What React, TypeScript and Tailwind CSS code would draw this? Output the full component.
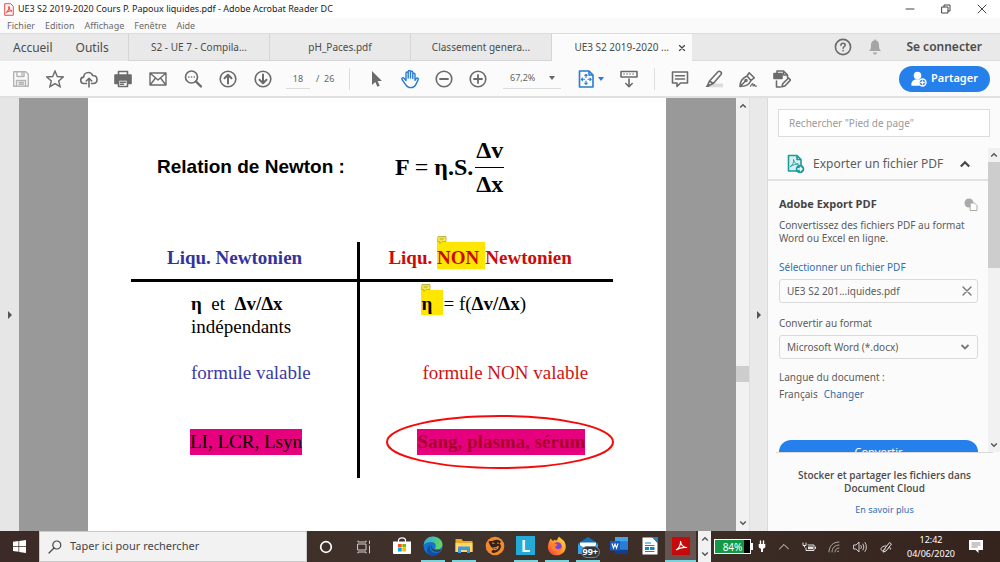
import React from "react";
import type { ReactNode } from "react";

type IconProps = { children: ReactNode; className?: string; box?: string };

function Icon({ children, className = "size-[18px] text-[#6b6b6b]", box = "0 0 18 18" }: IconProps) {
  return (
    <svg
      viewBox={box}
      className={`shrink-0 ${className}`}
      fill="none"
      stroke="currentColor"
      strokeWidth="1.600"
      strokeLinecap="round"
      strokeLinejoin="round"
      aria-hidden="true"
    >
      {children}
    </svg>
  );
}

function ToolButton({ label, children }: { label: string; children: ReactNode }) {
  return (
    <button type="button" aria-label={label} className="flex h-7 w-[34px] shrink-0 items-center justify-center">
      {children}
    </button>
  );
}

function Chevron({ up = false, className = "h-2 w-2 text-[#555]" }: { up?: boolean; className?: string }) {
  return (
    <Icon box="0 0 10 10" className={className}>
      <path d={up ? "M1.500 7 5 3.500 8.500 7" : "M1.500 3 5 6.500 8.500 3"} strokeWidth="1.800" strokeLinecap="butt" strokeLinejoin="miter" />
    </Icon>
  );
}

function TitleBar() {
  return (
    <header className="flex h-[18px] shrink-0 items-center bg-white pl-1 text-[9px] text-[#222]">
      <svg viewBox="0 0 10 13" className="mr-1 h-[13px] w-[10px] shrink-0" aria-hidden="true">
        <path d="M.7.700h6l2.600 2.600v9h-8.600z" fill="#fff3f2" stroke="#e8524c" />
        <path d="M2.300 9.500C4 8 5 6 5 3.500 5.200 6 6.300 7.600 8 8 6 7.600 4 8.200 2.300 9.500z" fill="none" stroke="#e0322c" strokeWidth="1" />
      </svg>
      <h1 className="flex-1 truncate">UE3 S2 2019-2020 Cours P. Papoux liquides.pdf - Adobe Acrobat Reader DC</h1>
      <button type="button" aria-label="Réduire" className="flex w-9 justify-center">
        <Icon box="0 0 10 10" className="size-[10px] text-[#444]"><path d="M1 5h8" strokeWidth="1" /></Icon>
      </button>
      <button type="button" aria-label="Restaurer" className="flex w-9 justify-center">
        <Icon box="0 0 10 10" className="size-[10px] text-[#444]"><path d="M1 3h6v6H1zM3 3V1h6v6H7" strokeWidth="1" /></Icon>
      </button>
      <button type="button" aria-label="Fermer" className="flex w-9 justify-center">
        <Icon box="0 0 10 10" className="size-[10px] text-[#444]"><path d="m1 1 8 8M9 1 1 9" strokeWidth="1" /></Icon>
      </button>
    </header>
  );
}

function MenuBar() {
  return (
    <nav aria-label="Menu" className="flex h-[15px] shrink-0 items-center gap-[10px] bg-[#fafafa] pl-[7px] text-[9px] text-[#6a6a6a]">
      {["Fichier", "Edition", "Affichage", "Fenêtre", "Aide"].map((m) => (
        <button key={m} type="button" className="leading-3">{m}</button>
      ))}
    </nav>
  );
}

function TabBar() {
  return (
    <div className="flex h-7 shrink-0 items-stretch border-t border-[#dcdcdc] bg-[#e9e9e9] text-[#4b4b4b]">
      <div className="flex w-[129px] shrink-0 items-center gap-[23px] border-r border-[#d5d5d5] pl-[13px] text-[12px]">
        <button type="button">Accueil</button>
        <button type="button">Outils</button>
      </div>
      {["S2 - UE 7 - Compila...", "pH_Paces.pdf", "Classement genera..."].map((t) => (
        <button key={t} type="button" className="w-[141px] shrink-0 border-r border-b border-[#d5d5d5] text-center text-[10px]">
          {t}
        </button>
      ))}
      <div className="flex w-[140px] shrink-0 items-center justify-end gap-2 bg-[#fbfbfb] pr-[5px] text-[10px]">
        <span className="whitespace-nowrap">UE3 S2 2019-2020 ...</span>
        <button type="button" aria-label="Fermer l'onglet" className="flex size-[10px] items-center justify-center">
          <Icon box="0 0 6 6" className="size-[6px] text-[#444]"><path d="m.5.500 5 5M5.500.500l-5 5" strokeWidth="1.300" /></Icon>
        </button>
      </div>
      <div className="flex flex-1 items-center justify-end border-b border-[#dcdcdc] pr-[18px]">
        <button type="button" aria-label="Aide">
          <Icon>
            <circle cx="9" cy="9" r="7.600" />
            <path d="M6.900 7.300C6.900 4.500 11.200 4.600 11.200 7c0 1.500-2.100 1.600-2.100 3.300M9.100 12.500v.3" strokeWidth="1.600" />
          </Icon>
        </button>
        <button type="button" aria-label="Notifications" className="ml-[15px]">
          <Icon className="size-[16px] text-[#a5a5a5]" box="0 0 16 16">
            <path d="M8 1.500c3 0 4 2 4 5s.7 4.300 2 5.500H2c1.300-1.200 2-2.500 2-5.500s1-5 4-5z" fill="currentColor" stroke="none" />
            <path d="M6 13.500h4a2 2 0 0 1-4 0zM7.200.5h1.600v2H7.200z" fill="currentColor" stroke="none" />
          </Icon>
        </button>
        <button type="button" className="ml-[23px] text-[12px] font-semibold">Se connecter</button>
      </div>
    </div>
  );
}

function Separator() {
  return <div className="h-[22px] w-px shrink-0 bg-[#dedede]" />;
}

function Toolbar() {
  return (
    <div className="flex h-[37px] shrink-0 items-center border-b-2 border-[#e0e0e0] bg-[#fbfbfb] pr-[10px] pl-1 text-[9px] text-[#666]">
      <ToolButton label="Enregistrer">
        <Icon className="size-[18px] text-[#b4b4b4]"><path d="M1.700 1.700h12l2.600 2.600v12H1.700zM5 2v4.500h7V2M10 3v2M4.500 16v-5.500h9V16M7 12.500h4.500M7 14.300h4.500" strokeWidth="1.400" /></Icon>
      </ToolButton>
      <ToolButton label="Favoris">
        <Icon><path d="m9 1 2.300 5.500 5.900.500-4.500 3.900 1.400 5.800L9 13.600l-5.100 3.100 1.400-5.800L.8 7l5.900-.5z" strokeWidth="1.400" strokeLinejoin="miter" /></Icon>
      </ToolButton>
      <ToolButton label="Partager dans le cloud">
        <Icon><path d="M6.500 13.500H4.200a3.200 3.200 0 0 1-.5-6.400C3.700 4.500 5.700 2.500 8.300 2.500c2 0 3.700 1.200 4.400 3 2.600 0 4.300 1.700 4.300 4 0 2.300-1.700 4-4 4h-1.500M9 17V8.500M6.300 11 9 8.300l2.700 2.700" /></Icon>
      </ToolButton>
      <ToolButton label="Imprimer">
        <Icon><path d="M4.500 5V1.500h9V5" /><path d="M1 5h16v8.500h-2.500V10h-11v3.500H1z" fill="currentColor" /><path d="M4.500 10h9v6.500h-9zM6.500 12.300h5M6.500 14.300h3" fill="#fff" /></Icon>
      </ToolButton>
      <div className="ml-px flex shrink-0 gap-px">
        <ToolButton label="Courrier">
          <Icon><path d="M1 3h16v12H1zM1.500 3.500 9 10l7.500-6.500M1.500 14.500 6.500 8M16.500 14.500l-5-6.500" strokeWidth="1.400" /></Icon>
        </ToolButton>
        <ToolButton label="Rechercher">
          <Icon><circle cx="7.500" cy="7" r="6" strokeWidth="1.700" /><path d="m12 11.500 5 5" strokeWidth="2.400" /><path d="M4.700 7h.1M7.500 7h.1M10.200 7h.1" strokeWidth="1.600" /></Icon>
        </ToolButton>
        <ToolButton label="Page précédente">
          <Icon><circle cx="9" cy="9" r="7.800" /><path d="M9 13.500V5M5.500 8.300 9 4.800l3.500 3.500" strokeWidth="2" /></Icon>
        </ToolButton>
        <ToolButton label="Page suivante">
          <Icon><circle cx="9" cy="9" r="7.800" /><path d="M9 4.500V13M5.500 9.700 9 13.200l3.500-3.500" strokeWidth="2" /></Icon>
        </ToolButton>
      </div>
      <input
        aria-label="Numéro de page"
        defaultValue="18"
        className="ml-[6px] h-5 w-6 shrink-0 border-b border-[#dcdcdc] bg-transparent text-center"
      />
      <span className="ml-[6px] w-[25px] shrink-0 whitespace-pre">/  26</span>
      <div className="ml-2"><Separator /></div>
      <div className="ml-[9px] flex">
        <ToolButton label="Sélection">
          <Icon><path d="M5 1v14l3.300-3 2.100 4.800 2.300-1-2.100-4.700H15z" fill="currentColor" stroke="none" /></Icon>
        </ToolButton>
        <ToolButton label="Main">
          <Icon className="size-5 text-[#2a7bd4]" box="0 0 20 20">
            <path d="M6 11.500V4.300c0-1.700 2.200-1.700 2.200 0V9 2.700c0-1.700 2.300-1.700 2.300 0V9 3.500c0-1.700 2.300-1.700 2.300 0v6-4c0-1.600 2.200-1.600 2.200 0v5.800l1.200-1.700c1-1.300 2.600-.3 2 1l-2.400 5c-1 2-2.500 3-5 3-2.600 0-4-1-5.200-3L2 10.500c-.7-1.500 1-2.500 2-1.200z" strokeWidth="1.400" />
          </Icon>
        </ToolButton>
        <ToolButton label="Zoom arrière">
          <Icon><circle cx="9" cy="9" r="7.800" /><path d="M5 9h8" strokeWidth="1.800" /></Icon>
        </ToolButton>
        <ToolButton label="Zoom avant">
          <Icon><circle cx="9" cy="9" r="7.800" /><path d="M5 9h8M9 5v8" strokeWidth="1.800" /></Icon>
        </ToolButton>
      </div>
      <div className="relative ml-2 flex h-5 w-[58px] shrink-0 items-center border-b border-[#dcdcdc]">
        <select aria-label="Niveau de zoom" className="w-full appearance-none bg-transparent pl-[7px]">
          <option>67,2%</option>
        </select>
        <svg viewBox="0 0 6 4" className="pointer-events-none absolute right-[6px] h-1 w-[6px]" aria-hidden="true"><path d="M0 0h6L3 4z" fill="#666" /></svg>
      </div>
      <button type="button" aria-label="Ajuster" className="ml-4 flex shrink-0 items-center gap-[3px]">
        <Icon className="size-[18px] text-[#2a7bd4]">
          <path d="M2.500 1h9.500l4 4v12H2.500zM12 1v4h4" />
          <path d="M9 4.500v3M7.800 5.500 9 4.300l1.200 1.200M9 14v-3M7.800 13.200 9 14.400l1.200-1.200M4.500 9.300h3M5.500 8.100 4.300 9.300l1.200 1.200M14 9.300h-3M13 8.100l1.200 1.200-1.200 1.200" strokeWidth="1.100" />
        </Icon>
        <svg viewBox="0 0 6 4" className="h-1 w-[6px]" aria-hidden="true"><path d="M0 0h6L3 4z" fill="#2a7bd4" /></svg>
      </button>
      <div className="ml-2 flex">
        <ToolButton label="Défilement">
          <Icon><path d="M1 1.500h16v5.500H1z" /><path d="M4 4h.1M7 4h.1M10 4h.1M13 4h.1" strokeWidth="1.400" /><path d="M9 9v7M5.800 13.500 9 16.700l3.200-3.200" /></Icon>
        </ToolButton>
      </div>
      <div className="ml-2"><Separator /></div>
      <div className="ml-2 flex">
        <ToolButton label="Commentaire">
          <Icon><path d="M1.500 2h15v11H9.500L6 16.500V13H1.500zM4.500 5.800h9M4.500 9h9" /></Icon>
        </ToolButton>
        <ToolButton label="Surligner">
          <Icon><path d="M7 13.500h11v3.700H4z" fill="#dcdcdc" stroke="none" /><path d="M4.500 11 13 1.800c1.500-1.500 4.500.7 3 2.700l-7.700 9zM4.500 11l3.800 2.500M4.300 11.500 3 14.300l1.500 1 3-1.500" /><path d="m2.700 14 2.500 1.600L4 17H.5z" fill="currentColor" stroke="none" /></Icon>
        </ToolButton>
        <ToolButton label="Signer">
          <Icon><path d="M1 16.500c0-5 1.500-8 7-10.500l4 4.500c-2 4.500-5.500 6-11 6zM1.500 16l4.800-4.800M8 6l2.200-3.200 5 5-3.200 2.700" /><circle cx="7" cy="10.500" r="1" /><path d="M11.500 16.300c2-3.500 2.500-3.500 2.500-1 0 1 .5 1 1.500-.8.200 1.500.5 1.800 2 1.500" strokeWidth="1.200" /></Icon>
        </ToolButton>
        <ToolButton label="Plus d'outils">
          <Icon><path d="M1 3.500h8v5H1z" fill="currentColor" /><path d="M4 3V1h6.500l4 4v2.500M10.500 1v4h4M3.500 11v6h4M9 16.800l.7-3L15.500 8l2 2-5.700 6z" /></Icon>
        </ToolButton>
      </div>
      <button type="button" className="ml-auto flex h-[26px] w-[91px] shrink-0 items-center justify-center gap-1 rounded-full bg-[#2680eb] text-[11px] font-semibold text-white">
        <Icon box="0 0 16 16" className="size-4 text-white">
          <circle cx="6.500" cy="4.500" r="3" fill="currentColor" />
          <path d="M1 14c0-3.500 2-4.500 4-5h3v5z" fill="currentColor" />
          <circle cx="11.500" cy="11.500" r="3.500" fill="#2680eb" strokeWidth="1.400" />
          <path d="M9.800 11.500h3.400M11.500 9.800v3.400" strokeWidth="1.300" />
        </Icon>
        Partager
      </button>
    </div>
  );
}

function Note({ className }: { className: string }) {
  return (
    <svg viewBox="0 0 10 8" className={`absolute h-2 w-[10px] ${className}`} aria-hidden="true">
      <path d="M1 .5h8v5H5L3 7.500V5.500H.5z" fill="#fff04a" stroke="#a89a1c" strokeWidth=".7" />
      <path d="M2.500 2.200h5M2.500 3.700h4" stroke="#a89a1c" strokeWidth=".6" />
    </svg>
  );
}

function Slide() {
  return (
    <article className="h-full bg-white text-black">
      <div className="flex items-center pt-9 pl-[69px]">
        <h2 className="w-[238px] font-['Liberation_Sans',sans-serif] text-[19px] font-bold">Relation de Newton :</h2>
        <div className="flex items-center font-['Liberation_Serif',serif] text-[24px] leading-[33px] font-bold">
          <span>F <span className="font-normal">=</span> η.S.</span>
          <span className="ml-[2px] flex flex-col items-center">
            <span className="border-b border-black px-px">Δv</span>
            <span>Δx</span>
          </span>
        </div>
      </div>
      <div className="mt-[41px] mr-[53px] ml-[43px]">
        <table className="w-full table-fixed border-separate border-spacing-0 text-left font-['Liberation_Serif',serif] text-[19px] leading-[23px] whitespace-nowrap">
          <colgroup>
            <col className="w-[47.6%]" />
            <col />
          </colgroup>
          <thead>
            <tr className="h-10 align-top">
              <th scope="col" className="border-r-3 border-b-3 border-black pt-1 pl-9 text-[#3333a0]">Liqu. Newtonien</th>
              <th scope="col" className="border-b-3 border-black pl-7 text-[#cc0a0a]">
                <span className="flex">
                  <span className="whitespace-pre pt-1">Liqu. </span>
                  <span className="relative bg-[#ffe600] pt-1 pr-[6px]">
                    <Note className="-top-[6px] left-0" />
                    NON
                  </span>
                  <span className="pt-1">Newtonien</span>
                </span>
              </th>
            </tr>
          </thead>
          <tbody className="align-top">
            <tr className="h-[68px]">
              <td className="border-r-3 border-black pt-[10px] pl-[60px]">
                <b>η</b>&nbsp; et &nbsp;<b>Δv/Δx</b>
                <br />
                indépendants
              </td>
              <td className="pt-2 pl-[61px]">
                <span className="flex">
                  <b className="relative w-[22px] bg-[#ffe600] pt-[2px]">
                    <Note className="-top-[6px] left-0" />
                    η
                  </b>
                  <span className="pt-[2px]">= f(<b>Δv/Δx</b>)</span>
                </span>
              </td>
            </tr>
            <tr className="h-[58px]">
              <td className="border-r-3 border-black pt-[11px] pl-[60px] text-[#3a3aa5]">formule valable</td>
              <td className="pt-[11px] pl-[62px] text-[#cc1414]">formule NON valable</td>
            </tr>
            <tr className="h-[70px]">
              <td className="border-r-3 border-black pt-[21px] pl-[59px]">
                <span className="inline-block bg-[#e6007e] py-px leading-6">LI, LCR, Lsyn</span>
              </td>
              <td className="pt-[21px] pl-[57px]">
                <b className="relative inline-block bg-[#e6007e] py-px leading-6 text-[#a8002c]">
                  Sang, plasma, sérum
                  <svg viewBox="0 0 228 54" className="absolute -top-[14px] -left-[31px] h-[54px] w-[228px]" fill="none" aria-hidden="true">
                    <ellipse cx="114" cy="27" rx="113" ry="26" stroke="#f50a0a" strokeWidth="2" />
                  </svg>
                </b>
              </td>
            </tr>
          </tbody>
        </table>
      </div>
    </article>
  );
}

function ExportPanel() {
  return (
    <aside className="flex w-[233px] shrink-0 flex-col border-l border-[#dadada] bg-[#fbfbfb] text-[10px] text-[#5b5b5b]">
      <div className="pt-[11px] pr-[10px] pb-[11px] pl-[10px]">
        <input
          type="search"
          aria-label="Rechercher un outil"
          placeholder={'Rechercher "Pied de page"'}
          className="h-7 w-full border border-[#dcdcdc] bg-white px-[10px] text-[10px] placeholder:text-[#9a9a9a]"
        />
      </div>
      <div className="flex min-h-0 flex-1">
        <div className="flex min-w-0 flex-1 flex-col overflow-hidden">
          <button type="button" className="flex h-[33px] shrink-0 items-center border-b-2 border-[#e2e2e2] pr-[17px] pl-[19px] text-[12px]">
            <Icon box="0 0 18 20" className="h-5 w-[18px] text-[#1c9a9a]">
              <path d="M1.500 1.500h8.500l4 4v11.500H1.500zM10 1.500v4h4" fill="#d9efef" />
              <path d="M3.500 12.500C6 11 7 8 6.500 5.500 7 8.500 9 10 11.500 10.200 8.500 10 6 11 3.500 12.500z" strokeWidth=".9" />
              <circle cx="13" cy="15" r="4.300" fill="currentColor" stroke="none" />
              <path d="M10.800 15h4M13.300 13.300l1.700 1.700-1.700 1.700" stroke="#fff" strokeWidth="1.300" />
            </Icon>
            <span className="ml-2 flex-1 text-left whitespace-nowrap">Exporter un fichier PDF</span>
            <Chevron up className="size-3 text-[#444]" />
          </button>
          <div className="flex flex-col pr-[10px] pl-[11px]">
            <div className="mt-[15px] flex h-4 items-center justify-between">
              <h2 className="font-['Open_Sans',sans-serif] text-[11px] font-bold text-[#444]">Adobe Export PDF</h2>
              <Icon box="0 0 14 13" className="h-[13px] w-[14px] text-[#aaa]">
                <circle cx="5" cy="5" r="4.500" fill="currentColor" stroke="none" />
                <path d="M6.500 5h4l2.500 2.500v5H6.500z" fill="#fff" strokeWidth="1" />
              </Icon>
            </div>
            <p className="mt-[7px] leading-[13px]">Convertissez des fichiers PDF au format Word ou Excel en ligne.</p>
            <a href="#fichier" className="mt-4 leading-[13px] text-[#2f6fb5]">Sélectionner un fichier PDF</a>
            <div className="mt-[5px] flex h-6 items-center justify-between rounded-[3px] border border-[#dadada] pr-[5px] pl-[7px]">
              <span>UE3 S2 201...iquides.pdf</span>
              <button type="button" aria-label="Retirer le fichier">
                <Icon box="0 0 10 10" className="size-[10px] text-[#777]"><path d="m1 1 8 8M9 1 1 9" strokeWidth="1.400" /></Icon>
              </button>
            </div>
            <label htmlFor="format" className="mt-[14px] leading-[13px]">Convertir au format</label>
            <div className="relative mt-[5px] flex items-center">
              <select id="format" className="h-6 w-full appearance-none rounded-[3px] border border-[#dadada] bg-transparent pl-[7px]">
                <option>Microsoft Word (*.docx)</option>
              </select>
              <Chevron className="pointer-events-none absolute right-2 size-[10px] text-[#777]" />
            </div>
            <p className="mt-3 leading-[13px]">Langue du document :</p>
            <p className="mt-1 flex gap-[6px] leading-[13px]">
              <span>Français</span>
              <a href="#langue" className="text-[#2f6fb5]">Changer</a>
            </p>
            <button type="button" className="mt-[39px] h-6 shrink-0 rounded-full bg-[#2680eb] text-[11px] text-white">Convertir</button>
          </div>
        </div>
        <div className="flex w-3 shrink-0 flex-col items-center bg-[#f1f1f1]">
          <div className="flex h-[14px] items-center"><Chevron up /></div>
          <div className="h-[106px] w-full bg-[#cdcdcd]" />
          <div className="mt-auto flex h-[14px] items-center"><Chevron /></div>
        </div>
      </div>
      <footer className="mr-[7px] ml-2 flex h-[79px] shrink-0 flex-col items-center border-t border-[#dadada] pt-4 text-center leading-[13px]">
        <p className="font-['Open_Sans',sans-serif] font-semibold text-[#4b4b4b]">Stocker et partager les fichiers dans<br />Document Cloud</p>
        <a href="#cloud" className="mt-2 text-[9px] text-[#2f6fb5]">En savoir plus</a>
      </footer>
    </aside>
  );
}

type TaskProps = { label: string; open?: boolean; active?: boolean; children: ReactNode };

function TaskButton({ label, open = false, active = false, children }: TaskProps) {
  return (
    <button type="button" aria-label={label} className={`flex w-[31px] shrink-0 justify-center ${active ? "bg-[#655451]" : ""}`}>
      <span className={`relative flex h-full items-center justify-center border-b-2 ${active ? "w-full" : "w-6"} ${open ? "border-[#76d5dc]" : "border-transparent"}`}>
        {children}
      </span>
    </button>
  );
}

function TaskBar() {
  return (
    <footer className="flex h-[31px] shrink-0 items-stretch bg-linear-to-r from-[#3b2a25] via-[#40332c] to-[#35241d] text-white">
      <button type="button" aria-label="Démarrer" className="flex w-[39px] shrink-0 items-center justify-center">
        <svg viewBox="0 0 13 13" className="size-[13px]" aria-hidden="true"><path d="M0 1.800 5.500 1v5H0zM6.200.9 13 0v6H6.200zM0 6.700h5.500v5L0 11zM6.200 6.700H13V13l-6.800-1z" fill="#fff" /></svg>
      </button>
      <label className="flex min-w-0 flex-1 items-center gap-2 border border-[#c9c9c9] bg-[#f2f2f2] pl-2 text-[#444]">
        <Icon box="0 0 14 14" className="size-[14px] text-[#444]"><circle cx="8.800" cy="5" r="4" strokeWidth="1.200" /><path d="m6 8-5 5" strokeWidth="1.200" /></Icon>
        <input aria-label="Rechercher" placeholder="Taper ici pour rechercher" className="w-full min-w-0 bg-transparent text-[11px] placeholder:text-[#444]" />
      </label>
      <div className="flex w-[76px] shrink-0 items-center justify-around">
        <button type="button" aria-label="Cortana"><Icon box="0 0 14 14" className="size-[14px] text-white"><circle cx="7" cy="7" r="5.300" strokeWidth="1.700" /></Icon></button>
        <button type="button" aria-label="Vue des tâches"><Icon box="0 0 14 14" className="size-[14px] text-[#d5d0ce]"><path d="M1 4h8v6H1zM1 1v1h8V1M1 13v-1h8v1M12.500 1v2.500M12.500 6v7" strokeWidth="1" /></Icon></button>
      </div>
      <div className="ml-[3px] flex shrink-0">
        <TaskButton label="Microsoft Store">
          <svg viewBox="0 0 18 18" className="size-[18px]" aria-hidden="true">
            <path d="M5.500 5V3.500C5.500 0 12.500 0 12.500 3.500V5" fill="none" stroke="#fff" strokeWidth="1.200" />
            <path d="M0 4.500h18V16q0 1-1 1H1q-1 0-1-1z" fill="#fff" />
            <path d="M5 7h3.700v3.500H5z" fill="#f25022" /><path d="M9.300 7H13v3.500H9.300z" fill="#7fba00" /><path d="M5 11h3.700v3.500H5z" fill="#00a4ef" /><path d="M9.300 11H13v3.500H9.300z" fill="#ffb900" />
          </svg>
        </TaskButton>
        <TaskButton label="Edge" open>
          <svg viewBox="0 0 20 20" className="size-5" aria-hidden="true">
            <defs><linearGradient id="edge" x2="1" y2=".3"><stop stopColor="#2aa9e8" /><stop offset="1" stopColor="#62d463" /></linearGradient></defs>
            <circle cx="10" cy="10" r="9.500" fill="#1673c9" />
            <path d="M.6 9C1.300 3.500 5 .5 10 .5c5.500 0 9.500 4 9.500 8 0 3-2.500 4.700-5 4.700-2 0-3-.7-2-2C13.500 9 12 6 8.500 6 5 6 2 7 .6 9z" fill="url(#edge)" />
            <path d="M7.500 8.500c-2 4 .5 8.500 5 8.500 2 0 3.800-.7 5-1.800-2 4-7 5.400-11.200 3.500C3 17 3 11 7.500 8.500z" fill="#1150a0" />
            <path d="M9.300 8.500c-1.300 1.800-.6 5.300 3.700 6 1.800.2 3.300-.1 5-.9l-.8 1.300c-3 1.500-8 .8-8.900-2.900-.3-1.400.1-2.700 1-3.500z" fill="#3b2b27" />
          </svg>
        </TaskButton>
        <TaskButton label="Explorateur" open>
          <svg viewBox="0 0 18 16" className="h-4 w-[18px]" aria-hidden="true">
            <path d="M.5 1h6l1.500 2h9.500v11H.5z" fill="#e9a825" /><path d="M.5 5h17v9H.5z" fill="#ffd867" /><path d="M3 15V9.500Q3 8.500 4 8.500h10q1 0 1 1V15h-3v-3H6v3z" fill="#3e9be0" />
          </svg>
        </TaskButton>
        <TaskButton label="Avatar">
          <svg viewBox="0 0 20 20" className="size-5" aria-hidden="true">
            <circle cx="10" cy="10" r="9.300" fill="#f08a2c" />
            <path d="M3.500 6c1.500-2 3 0 5-1.500 3-1.500 6-1 7.500 1.500l-1.500 1.500 1.500 2c0 4-3 6.500-7 7.500-2 .3-3-1.500-2-2.500l2-.8L5.500 10z" fill="#33201a" />
            <path d="m7 7 2.500.5M12 7.300l2-.3M8.500 12c2 0 4-.8 5-2l-1 2.500-2.500 1.300z" stroke="#f08a2c" strokeWidth="1.100" fill="none" />
          </svg>
        </TaskButton>
        <TaskButton label="Lexibar" open>
          <span className="flex size-[19px] items-center justify-center bg-[#25a9d6] font-['Lato',sans-serif] text-[17px] leading-none font-bold">L</span>
        </TaskButton>
        <TaskButton label="Firefox" open>
          <svg viewBox="0 0 20 20" className="size-5" aria-hidden="true">
            <defs><linearGradient id="fox" x1="1" x2="0" y2="1"><stop stopColor="#ffe14a" /><stop offset=".5" stopColor="#ff9a28" /><stop offset="1" stopColor="#f5304f" /></linearGradient></defs>
            <path d="M2 6 3.500 2.500 6 5l2-1.500C8.500 5 10 4.500 10.500 3L12 .5c1 2 5 3 6 6.500 2.500 6-1.500 12-8 12.300C4 19.500.5 15 1 10c0-2 1-4 1-4z" fill="url(#fox)" />
            <circle cx="10.500" cy="10.500" r="4.300" fill="#8140d8" />
            <path d="M5 8c2-1 4 0 5.500.5-.5 1.500-2 1.500-2.500 2.500 1 2.500 4 3 6.500.5-1 5-9 5-10-1z" fill="#ff8426" />
          </svg>
        </TaskButton>
        <TaskButton label="Courrier" open>
          <svg viewBox="0 0 20 18" className="h-[18px] w-5 shrink-0" aria-hidden="true">
            <path d="M0 6.500 10 0l10 6.500V17H0z" fill="#1271b8" /><path d="M2 5.500h16V10l-8 4-8-4z" fill="#fff" /><path d="m0 7 10 6 10-6v10H0z" fill="#32a4e8" />
          </svg>
          <span className="absolute top-[15px] left-[5px] rounded-full border border-[#78848b] bg-[#303940] px-px text-[9px] leading-[10px] font-bold">99+</span>
        </TaskButton>
        <TaskButton label="Word">
          <svg viewBox="0 0 18 17" className="h-[17px] w-[18px]" aria-hidden="true">
            <path d="M5 0h13v17H5z" fill="#2b7cd3" /><path d="M5 0h13v4.300H5z" fill="#41a5ee" /><path d="M5 12.800h13V17H5z" fill="#103f91" /><path d="M0 4h10v9.500H0z" fill="#185abd" />
            <path d="m2 6.500 1.500 4.500L5 7l1.500 4L8 6.500" fill="none" stroke="#fff" strokeWidth="1.100" />
          </svg>
        </TaskButton>
        <TaskButton label="Writer">
          <svg viewBox="0 0 16 18" className="h-[18px] w-4" aria-hidden="true">
            <path d="M.5.500h10L15.500 6v11.500H.5z" fill="#fff" /><path d="M10 0h6v6z" fill="#1b85c4" /><path d="M3 6h6M3 8.500h9.500M3 14.500h9.500" stroke="#1b85c4" strokeWidth="1.200" /><path d="M3 10h4v3H3zM8 10h4.500v3H8z" fill="#1b85c4" />
          </svg>
        </TaskButton>
        <TaskButton label="Acrobat Reader" open active>
          <svg viewBox="0 0 18 18" className="size-[18px]" aria-hidden="true">
            <path d="M0 0h18v18H0z" fill="#c60a0a" /><path d="M4 13c3-1.500 5-5.500 4.500-9 .5 4 3 7 6.500 6.500-4-.5-8 .5-11 2.500z" fill="none" stroke="#fff" strokeWidth="1.100" />
          </svg>
        </TaskButton>
      </div>
      <div className="ml-[2px] flex w-[13px] shrink-0 flex-col items-center justify-between bg-[#f1f1f1] py-1">
        <Chevron up /><Chevron />
      </div>
      <div className="ml-[3px] flex shrink-0 items-center">
        <div className="flex h-[15px] w-[37px] items-center justify-center border border-white bg-linear-to-r from-[#149a46] from-82% to-black to-82% text-[10px] leading-3">84%</div>
        <span className="h-[7px] w-[2px] bg-white" />
      </div>
      <div className="flex w-[152px] shrink-0 items-center justify-between pr-[13px] pl-[5px]">
        <Icon box="0 0 8 13" className="h-[13px] w-2 text-white"><path d="M2.500 1v3M5.500 1v3" strokeWidth="1.400" /><path d="M.7 4h6.600v3Q6.500 8.500 5 8.800V12H3V8.800Q1.500 8.500.7 7z" fill="currentColor" stroke="none" /></Icon>
        <Icon box="0 0 10 10" className="size-[10px] text-[#ddd]"><path d="M.5 7 5 2.500 9.500 7" strokeWidth="1" /></Icon>
        <Icon box="0 0 14 10" className="h-[10px] w-[14px] text-[#e5e5e5]"><path d="M6 3h6v5.500H4V6M1 1v2.500h3V1M2.500 3.500V5M13.500 5v1.500" strokeWidth="1" /><path d="M6 4.500h5v2.700H6z" fill="currentColor" stroke="none" /></Icon>
        <Icon box="0 0 12 12" className="size-3 text-[#bbb3b0]"><path d="M1 11C1 5 5 1 11 1M4 11c0-4 3-7 7-7M7 11c0-2.500 1.500-4 4-4" strokeWidth=".9" /><circle cx="10" cy="10.300" r=".8" fill="currentColor" stroke="none" /></Icon>
        <Icon box="0 0 14 12" className="h-3 w-[14px] text-[#ddd]"><path d="M1 4h2l3-3v10L3 8H1zM8 4.500q1 1.500 0 3M10 3q2 3 0 6M12 1.500q3 4.500 0 9" strokeWidth=".9" /></Icon>
        <Icon box="0 0 12 12" className="size-3 text-[#ddd]"><path d="m4 8.500 5.500-7 2 1.500-5.500 7-2.500 1zM6.500 5C3 4.500 0 7 1.300 9s3 .5 4-1M8.500 7c1.500-1 3 0 2 1.300" strokeWidth="1" /></Icon>
      </div>
      <div className="flex w-[52px] shrink-0 flex-col justify-center text-center text-[9px] leading-[14px]">
        <time>12:42</time>
        <time>04/06/2020</time>
      </div>
      <button type="button" aria-label="Centre de notifications" className="flex w-[43px] shrink-0 items-center justify-center pr-[6px]">
        <svg viewBox="0 0 14 13" className="h-[13px] w-[14px]" aria-hidden="true"><path d="M0 0h14v10H9.500v3l-3-3H0z" fill="#fff" /><path d="M2.500 3h9M2.500 5h9M2.500 7h6" stroke="#80726d" strokeWidth=".8" /></svg>
      </button>
    </footer>
  );
}

export default function App() {
  return (
    <div className="flex h-screen flex-col overflow-hidden font-['Noto_Sans',sans-serif]">
      <TitleBar />
      <MenuBar />
      <TabBar />
      <Toolbar />
      <main className="flex min-h-0 flex-1">
        <button type="button" aria-label="Ouvrir le volet gauche" className="flex w-[19px] shrink-0 items-center justify-center bg-[#e6e6e6]">
          <svg viewBox="0 0 4 8" className="h-2 w-1" aria-hidden="true"><path d="M0 0v8l4-4z" fill="#555" /></svg>
        </button>
        <section className="min-w-0 flex-1 bg-[#999] pr-[70px] pl-[69px]">
          <Slide />
        </section>
        <div className="flex w-[13px] shrink-0 flex-col items-center bg-[#f1f1f1]">
          <div className="flex h-4 items-center"><Chevron up /></div>
          <div className="flex-[252]" />
          <div className="h-4 w-full bg-[#cdcdcd]" />
          <div className="flex-[133]" />
          <div className="flex h-4 items-center"><Chevron /></div>
        </div>
        <button type="button" aria-label="Fermer le volet droit" className="flex w-[18px] shrink-0 items-center justify-center border-l border-[#dedede] bg-[#e9e9e9]">
          <svg viewBox="0 0 4 8" className="h-2 w-1" aria-hidden="true"><path d="M0 0v8l4-4z" fill="#555" /></svg>
        </button>
        <ExportPanel />
      </main>
      <TaskBar />
    </div>
  );
}
